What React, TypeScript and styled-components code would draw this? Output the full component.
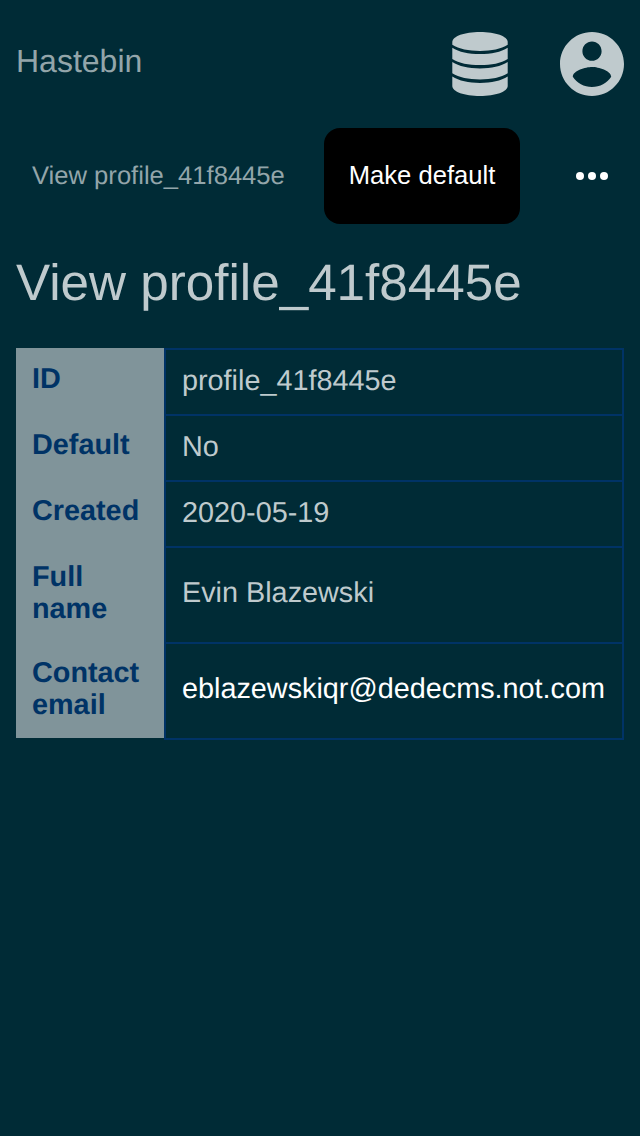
import React from "react";
import styled, { createGlobalStyle } from "styled-components";

const GlobalStyle = createGlobalStyle`
  * { box-sizing: border-box; }
  body {
    margin: 0;
    min-height: 100vh;
    background: #002b36;
    color: #bfcacd;
    font-family: "Liberation Sans", Arial, sans-serif;
    text-rendering: geometricPrecision;
  }
`;

const Header = styled.header`
  display: flex;
  justify-content: space-between;
  height: 128px;
  padding: 32px 16px;
`;

const Brand = styled.div`
  font-size: 32px;
  line-height: 58px;
  color: #93a5aa;
`;

const HeaderIcons = styled.div`
  display: flex;
  gap: 48px;
  color: #bfcacd;
  svg { display: block; }
`;

const Toolbar = styled.nav`
  display: flex;
  align-items: center;
  height: 96px;
  padding: 0 32px;
  font-size: 25.6px;
`;

const Crumb = styled.div`
  width: 292px;
  color: #93a5aa;
  line-height: 32px;
`;

const Button = styled.button`
  width: 196px;
  height: 96px;
  padding: 0 0 2px;
  border: 0;
  border-radius: 16px;
  background: #000;
  color: #fff;
  font: inherit;
`;

const MoreButton = styled.button`
  margin-left: auto;
  padding: 0;
  border: 0;
  background: none;
  svg { display: block; }
`;

const Title = styled.h1`
  margin: 28px 16px 34px;
  font-size: 51.2px;
  font-weight: 400;
  line-height: 62px;
`;

const Table = styled.dl`
  margin: 0 16px;
  font-size: 28.8px;
  line-height: 32px;
`;

const Row = styled.div<{ $height: number }>`
  display: flex;
  height: ${(p) => p.$height}px;

  &:first-child dt { padding-top: 15px; }
  &:last-child dt { margin-bottom: 2px; }
  &:first-child dd { border-top-width: 2px; }
`;

const Label = styled.dt`
  width: 148px;
  padding: 13px 16px;
  background: #80949a;
  color: #003366;
  font-weight: 700;
`;

const Value = styled.dd<{ $link?: boolean; $tall?: boolean }>`
  flex: 1;
  display: flex;
  align-items: center;
  margin: 0;
  padding: 0 16px ${(p) => (p.$tall ? 4 : 2)}px;
  border: 2px solid #003366;
  border-top-width: 0;
  color: ${(p) => (p.$link ? "#fff" : "inherit")};
`;

const DatabaseIcon = () => (
  <svg width="64" height="64" viewBox="0 0 64 64" fill="currentColor">
    <path d="M4.300 10C4.300 4.300 16.500 0 32 0S59.700 4.300 59.700 10V12.800C53 17 43.500 18.900 32 18.900S11 17 4.300 12.800Z" />
    <path d="M4.300 15.700C11 20 20.500 22.100 32 22.100S53 20 59.700 15.700V26.900C53 31.200 43.500 33.100 32 33.100S11 31.200 4.300 26.900Z" />
    <path d="M4.300 30.100C11 34.400 20.500 36.500 32 36.500S53 34.400 59.700 30.100V41.300C53 45.600 43.500 47.500 32 47.500S11 45.600 4.300 41.300Z" />
    <path d="M4.300 44.500C11 48.800 20.500 50.900 32 50.900S53 48.800 59.700 44.500V54C59.700 59.700 47.500 64 32 64S4.300 59.700 4.300 54Z" />
  </svg>
);

const AccountIcon = () => (
  <svg width="64" height="64" viewBox="2 2 20 20" fill="currentColor">
    <path d="M12 2C6.480 2 2 6.480 2 12s4.480 10 10 10 10-4.480 10-10S17.520 2 12 2zm0 3c1.660 0 3 1.340 3 3s-1.340 3-3 3-3-1.340-3-3 1.340-3 3-3zm0 14.200c-2.500 0-4.710-1.280-6-3.220.030-1.990 4-3.080 6-3.080 1.990 0 5.970 1.090 6 3.080-1.290 1.940-3.500 3.220-6 3.220z" />
  </svg>
);

const MoreIcon = () => (
  <svg width="32" height="8" viewBox="0 0 32 8" fill="#fff">
    <circle cx="4" cy="4" r="4" />
    <circle cx="16" cy="4" r="4" />
    <circle cx="28" cy="4" r="4" />
  </svg>
);

const rows = [
  { label: "ID", value: "profile_41f8445e", height: 68 },
  { label: "Default", value: "No", height: 66 },
  { label: "Created", value: "2020-05-19", height: 66 },
  { label: "Full name", value: "Evin Blazewski", height: 96 },
  { label: "Contact email", value: "eblazewskiqr@dedecms.not.com", height: 96, link: true },
];

export default function App() {
  return (
    <>
      <GlobalStyle />
      <Header>
        <Brand>Hastebin</Brand>
        <HeaderIcons>
          <DatabaseIcon />
          <AccountIcon />
        </HeaderIcons>
      </Header>
      <Toolbar>
        <Crumb>View profile_41f8445e</Crumb>
        <Button>Make default</Button>
        <MoreButton aria-label="More">
          <MoreIcon />
        </MoreButton>
      </Toolbar>
      <Title>View profile_41f8445e</Title>
      <Table>
        {rows.map((r) => (
          <Row key={r.label} $height={r.height}>
            <Label>{r.label}</Label>
            <Value $link={r.link} $tall={r.height > 90}>{r.value}</Value>
          </Row>
        ))}
      </Table>
    </>
  );
}
